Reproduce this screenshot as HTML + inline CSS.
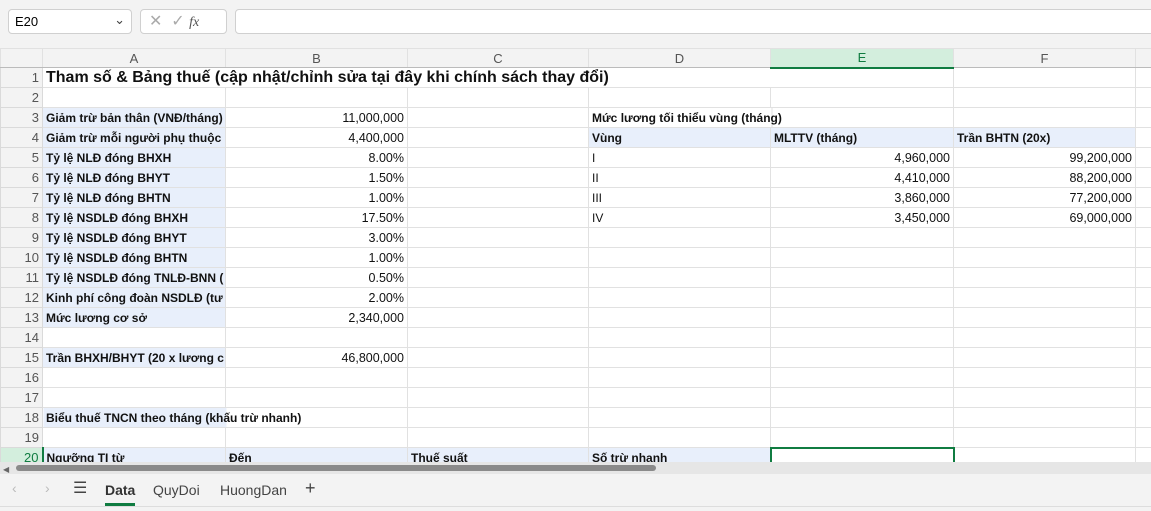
<!DOCTYPE html><html><head><style>
*{margin:0;padding:0;box-sizing:border-box}
body{width:1151px;height:511px;overflow:hidden;background:#f3f3f3;font-family:"Liberation Sans",sans-serif;position:relative}
.top{position:absolute;left:0;top:0;width:1151px;height:48px;background:#f3f3f3}
.box{position:absolute;background:#fff;border:1px solid #d0d0d0;border-radius:4px}
#grid{position:absolute;left:0;top:48px;width:1151px;height:414px;background:#fff;overflow:hidden}
table{border-collapse:collapse;table-layout:fixed;position:absolute;left:0;top:0;width:1165px}
td{height:20px;border:1px solid #e1e1e1;font-size:12px;font-weight:bold;white-space:nowrap;overflow:hidden;padding:0 3px;color:#111}
td.r{text-align:right;font-weight:normal;font-size:12.5px}
td.n{font-weight:normal}
td.h{background:#f3f3f3;color:#555;font-weight:normal;text-align:right;padding-right:3px;font-size:13px;border-color:#dadada}
tr.ch td{height:19px;background:#f3f3f3;text-align:center;font-weight:normal;color:#555;border-bottom:1px solid #bbb;font-size:13px}
.b{background:#e8effb}
</style></head><body>
<div class="top">
<div class="box" style="left:8px;top:9px;width:124px;height:25px;font-size:13px;padding:4px 6px">E20<span style="position:absolute;right:6px;top:2px;color:#444">&#8964;</span></div>
<div class="box" style="left:140px;top:9px;width:87px;height:25px;color:#aaa;font-size:16px;padding:1px 8px">✕ &nbsp;✓ <span style="font-style:italic;font-family:'Liberation Serif';color:#555;font-size:14px">fx</span></div>
<div class="box" style="left:235px;top:9px;width:920px;height:25px"></div>
</div>
<div id="grid">
<table>
<colgroup><col style="width:42px"><col style="width:183px"><col style="width:182px"><col style="width:181px"><col style="width:182px"><col style="width:183px"><col style="width:182px"><col style="width:30px"></colgroup>
<tr class="ch"><td style="background:#f3f3f3"></td><td>A</td><td>B</td><td>C</td><td>D</td><td style="background:#d3eedd;color:#107c41;border-bottom:2px solid #107c41">E</td><td>F</td><td></td></tr>
<tr><td class="h">1</td><td colspan="4" style="font-size:16px;border-right-color:transparent;overflow:visible">Tham số &amp; Bảng thuế (cập nhật/chỉnh sửa tại đây khi chính sách thay đổi)</td><td></td><td></td><td></td></tr>
<tr><td class="h">2</td><td></td><td></td><td></td><td></td><td></td><td></td><td></td></tr>
<tr><td class="h">3</td><td class="b">Giảm trừ bản thân (VNĐ/tháng)</td><td class="r">11,000,000</td><td></td><td colspan="2" style="background:linear-gradient(90deg,#fff 182px,#e1e1e1 182px,#e1e1e1 183px,#fff 183px)">Mức lương tối thiểu vùng (tháng)</td><td></td><td></td></tr>
<tr><td class="h">4</td><td class="b">Giảm trừ mỗi người phụ thuộc</td><td class="r">4,400,000</td><td></td><td class="b">Vùng</td><td class="b">MLTTV (tháng)</td><td class="b">Trần BHTN (20x)</td><td></td></tr>
<tr><td class="h">5</td><td class="b">Tỷ lệ NLĐ đóng BHXH</td><td class="r">8.00%</td><td></td><td class="n">I</td><td class="r">4,960,000</td><td class="r">99,200,000</td><td></td></tr>
<tr><td class="h">6</td><td class="b">Tỷ lệ NLĐ đóng BHYT</td><td class="r">1.50%</td><td></td><td class="n">II</td><td class="r">4,410,000</td><td class="r">88,200,000</td><td></td></tr>
<tr><td class="h">7</td><td class="b">Tỷ lệ NLĐ đóng BHTN</td><td class="r">1.00%</td><td></td><td class="n">III</td><td class="r">3,860,000</td><td class="r">77,200,000</td><td></td></tr>
<tr><td class="h">8</td><td class="b">Tỷ lệ NSDLĐ đóng BHXH</td><td class="r">17.50%</td><td></td><td class="n">IV</td><td class="r">3,450,000</td><td class="r">69,000,000</td><td></td></tr>
<tr><td class="h">9</td><td class="b">Tỷ lệ NSDLĐ đóng BHYT</td><td class="r">3.00%</td><td></td><td></td><td></td><td></td><td></td></tr>
<tr><td class="h">10</td><td class="b">Tỷ lệ NSDLĐ đóng BHTN</td><td class="r">1.00%</td><td></td><td></td><td></td><td></td><td></td></tr>
<tr><td class="h">11</td><td class="b">Tỷ lệ NSDLĐ đóng TNLĐ-BNN (</td><td class="r">0.50%</td><td></td><td></td><td></td><td></td><td></td></tr>
<tr><td class="h">12</td><td class="b">Kinh phí công đoàn NSDLĐ (tư</td><td class="r">2.00%</td><td></td><td></td><td></td><td></td><td></td></tr>
<tr><td class="h">13</td><td class="b">Mức lương cơ sở</td><td class="r">2,340,000</td><td></td><td></td><td></td><td></td><td></td></tr>
<tr><td class="h">14</td><td></td><td></td><td></td><td></td><td></td><td></td><td></td></tr>
<tr><td class="h">15</td><td class="b">Trần BHXH/BHYT (20 x lương c</td><td class="r">46,800,000</td><td></td><td></td><td></td><td></td><td></td></tr>
<tr><td class="h">16</td><td></td><td></td><td></td><td></td><td></td><td></td><td></td></tr>
<tr><td class="h">17</td><td></td><td></td><td></td><td></td><td></td><td></td><td></td></tr>
<tr><td class="h">18</td><td class="b" colspan="2" style="background:linear-gradient(90deg,#e8effb 183px,#fff 183px)">Biểu thuế TNCN theo tháng (khấu trừ nhanh)</td><td></td><td></td><td></td><td></td><td></td></tr>
<tr><td class="h">19</td><td></td><td></td><td></td><td></td><td></td><td></td><td></td></tr>
<tr><td class="h" style="background:#d3eedd;color:#107c41;border-right:2px solid #107c41">20</td><td class="b">Ngưỡng TI từ</td><td class="b">Đến</td><td class="b">Thuế suất</td><td class="b">Số trừ nhanh</td><td style="border:2px solid #107c41"></td><td></td><td></td></tr>
</table>
</div>
<div style="position:absolute;left:0;top:462px;width:1151px;height:12px;background:#e6e6e6"></div>
<div style="position:absolute;left:3px;top:465px;color:#666;font-size:8px">◀</div>
<div style="position:absolute;left:16px;top:465px;width:640px;height:6px;border-radius:3px;background:#8a8a8a"></div>
<div style="position:absolute;left:0;top:474px;width:1151px;height:32px;font-size:14px;color:#444">
<span style="position:absolute;left:12px;top:6px;color:#bbb">‹</span>
<span style="position:absolute;left:45px;top:6px;color:#bbb">›</span>
<span style="position:absolute;left:73px;top:4px;font-size:16px">☰</span>
<span style="position:absolute;left:105px;top:8px;font-weight:bold;color:#333">Data</span>
<div style="position:absolute;left:105px;top:29px;width:30px;height:3px;background:#107c41"></div>
<span style="position:absolute;left:153px;top:8px">QuyDoi</span>
<span style="position:absolute;left:220px;top:8px">HuongDan</span>
<span style="position:absolute;left:305px;top:4px;font-size:18px">+</span>
</div>
<div style="position:absolute;left:0;top:506px;width:1151px;height:5px;background:#f3f3f3;border-top:1px solid #ddd"></div>
</body></html>
